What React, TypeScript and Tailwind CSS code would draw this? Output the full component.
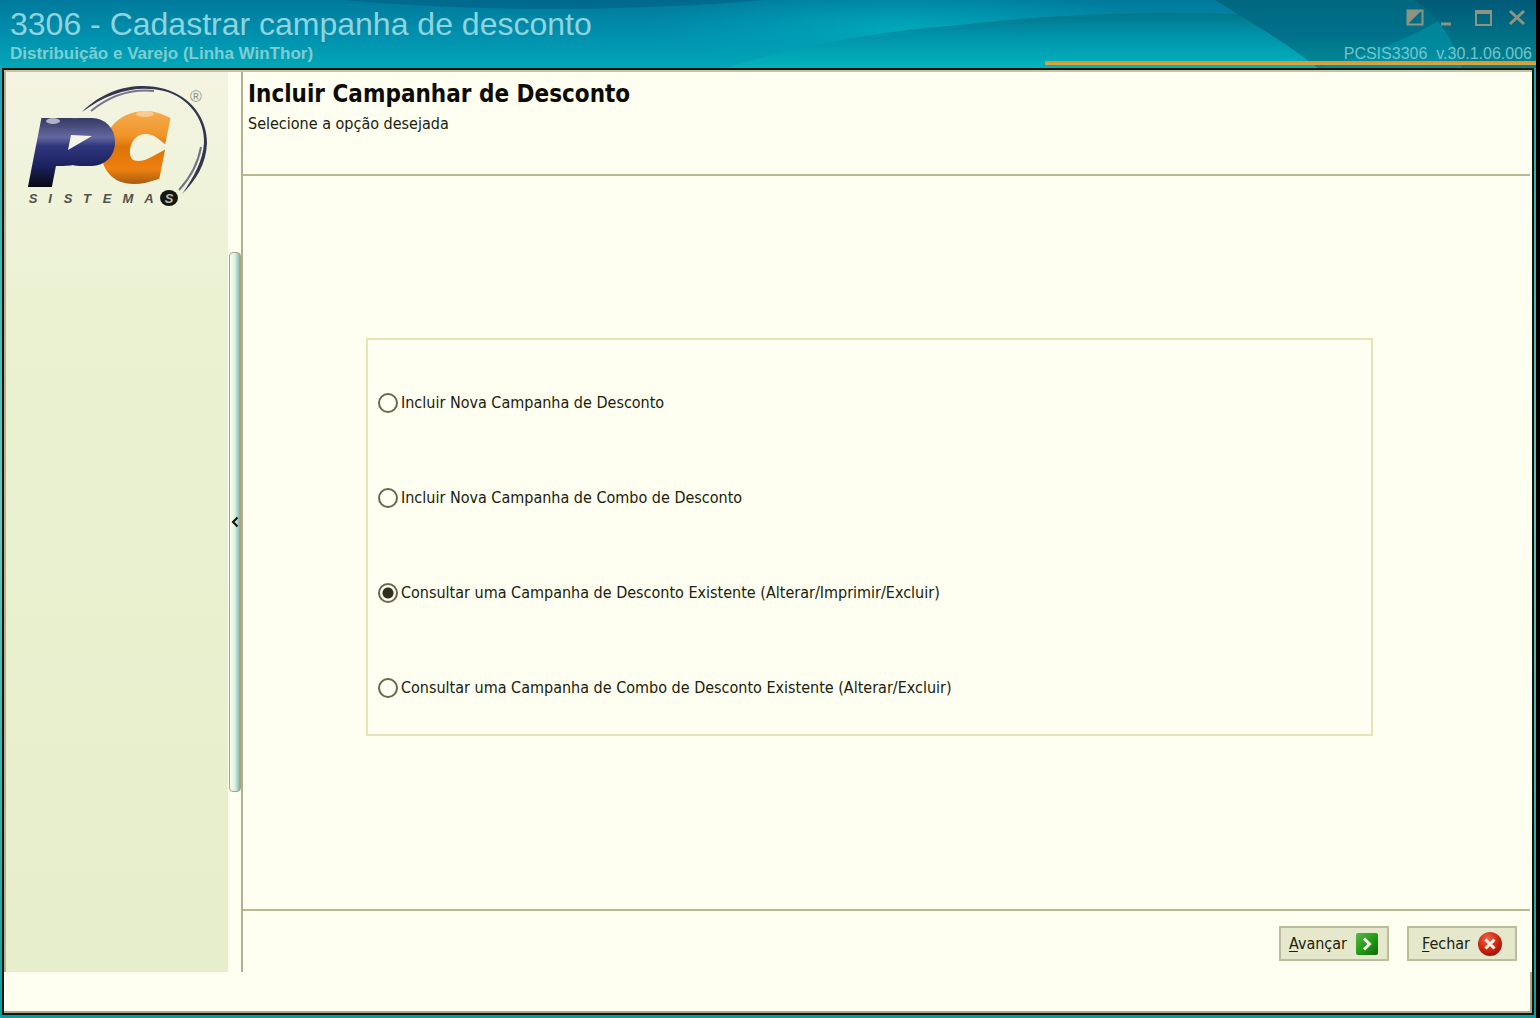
import { useState } from "react";

const OPTIONS = [
  "Incluir Nova Campanha de Desconto",
  "Incluir Nova Campanha de Combo de Desconto",
  "Consultar uma Campanha de Desconto Existente (Alterar/Imprimir/Excluir)",
  "Consultar uma Campanha de Combo de Desconto Existente (Alterar/Excluir)",
];

function TitleWaves() {
  return (
    <svg className="absolute inset-0 h-full w-full" viewBox="0 0 1536 68" preserveAspectRatio="none" aria-hidden="true">
      <defs>
        <linearGradient id="sky" x1="0" y1="0" x2="0" y2="1">
          <stop offset="0" stopColor="#007a9c" />
          <stop offset="0.5" stopColor="#008fad" />
          <stop offset="1" stopColor="#00a8b8" />
        </linearGradient>
        <radialGradient id="glow">
          <stop offset="0" stopColor="#00acbc" stopOpacity="0.9" />
          <stop offset="1" stopColor="#00a0b8" stopOpacity="0" />
        </radialGradient>
        <linearGradient id="swell" x1="0" y1="0" x2="0" y2="1">
          <stop offset="0" stopColor="#007688" />
          <stop offset="0.35" stopColor="#008fa8" />
          <stop offset="1" stopColor="#00b4bc" />
        </linearGradient>
        <linearGradient id="deep" x1="0" y1="0" x2="0" y2="1">
          <stop offset="0" stopColor="#006880" />
          <stop offset="0.5" stopColor="#00708a" />
          <stop offset="1" stopColor="#008c98" />
        </linearGradient>
        <linearGradient id="corner" x1="0" y1="0" x2="0" y2="1">
          <stop offset="0" stopColor="#005a78" />
          <stop offset="1" stopColor="#008490" />
        </linearGradient>
      </defs>
      <rect width="1536" height="68" fill="url(#sky)" />
      <path d="M340 0H765Q700 6 620 8Q480 12 340 0Z" fill="#006488" opacity="0.7" />
      <ellipse cx="900" cy="30" rx="260" ry="44" fill="url(#glow)" />
      <path d="M725 68C800 45 880 31 960 25C1060 13 1150 12 1245 14L1330 68Z" fill="url(#swell)" />
      <path d="M1215 0C1250 22 1285 42 1318 68H1536V0Z" fill="url(#deep)" />
      <path d="M1318 68C1360 56 1400 44 1440 20L1475 68Z" fill="#0094a8" opacity="0.6" />
      <path d="M1414 0C1436 14 1452 36 1462 68H1536V0Z" fill="url(#corner)" />
    </svg>
  );
}

function Logo() {
  return (
    <svg className="mt-2 ml-4 h-[130px] w-[190px]" viewBox="22 80 190 130" role="img" aria-label="PC Sistemas">
      <defs>
        <linearGradient id="navy" gradientUnits="userSpaceOnUse" x1="0" y1="116" x2="0" y2="187">
          <stop offset="0" stopColor="#30345c" />
          <stop offset="0.3" stopColor="#6468a0" />
          <stop offset="0.42" stopColor="#30367c" />
          <stop offset="0.7" stopColor="#1c2260" />
          <stop offset="1" stopColor="#080a14" />
        </linearGradient>
        <linearGradient id="amber" gradientUnits="userSpaceOnUse" x1="0" y1="110" x2="0" y2="184">
          <stop offset="0" stopColor="#f4ae50" />
          <stop offset="0.35" stopColor="#f09428" />
          <stop offset="0.5" stopColor="#dc7408" />
          <stop offset="0.8" stopColor="#ee8010" />
          <stop offset="1" stopColor="#a85c10" />
        </linearGradient>
      </defs>
      <path d="M82 112C107 87 139 82 165 89C192 97 207 119 207 143C206 165 196 180 182 194C194 177 203 160 204 143C205 119 188 97 164 91C137 85 111 91 82 112Z" fill="#34364e" />
      <path d="M91 111C112 94 134 89 154 91" fill="none" stroke="#73758a" strokeWidth="2" />
      <path d="M201 147C198 164 190 178 179 190" fill="none" stroke="#73758a" strokeWidth="2" />
      <g fontFamily="DejaVu Sans" fontWeight="bold" fontStyle="italic" strokeLinejoin="miter">
        <text x="105" y="177" fontSize="81" fill="url(#amber)" stroke="url(#amber)" strokeWidth="12">C</text>
        <text x="31" y="183" fontSize="84" fill="url(#navy)" stroke="url(#navy)" strokeWidth="8">P</text>
      </g>
      <rect x="56" y="118" width="59" height="48" rx="23" fill="url(#navy)" />
      <path d="M71 135L92 136L68 150Z" fill="#f3f4e6" />
      <ellipse cx="53" cy="121" rx="7" ry="3" fill="#ffffff" opacity="0.6" />
      <ellipse cx="145" cy="114" rx="9" ry="3" fill="#ffffff" opacity="0.4" />
      <text x="190" y="102" fontSize="16" fontFamily="Liberation Sans" fill="#90928c">®</text>
      <g fontFamily="Liberation Sans" fontWeight="bold" fontStyle="italic" fontSize="13" fill="#50524c" textAnchor="middle">
        <text x="33" y="203">S</text>
        <text x="50" y="203">I</text>
        <text x="68" y="203">S</text>
        <text x="87" y="203">T</text>
        <text x="107" y="203">E</text>
        <text x="128" y="203">M</text>
        <text x="149" y="203">A</text>
        <ellipse cx="169" cy="198" rx="9" ry="8" fill="#15160f" />
        <text x="169" y="203" fill="#b8baa8">S</text>
      </g>
    </svg>
  );
}

function WindowControls() {
  return (
    <div className="flex gap-3 text-[#8d9580]">
      <button aria-label="Recolher" className="size-[22px]">
        <svg viewBox="0 0 22 22" aria-hidden="true">
          <path d="M3.5 3.5H18.5V17.5H3.5Z" fill="none" stroke="currentColor" strokeWidth="2" />
          <path d="M3 3H18L3 18Z" fill="currentColor" />
        </svg>
      </button>
      <button aria-label="Minimizar" className="size-[22px]">
        <svg viewBox="0 0 22 22" aria-hidden="true">
          <path d="M3 17H13" stroke="currentColor" strokeWidth="3" />
        </svg>
      </button>
      <button aria-label="Maximizar" className="size-[22px]">
        <svg viewBox="0 0 22 22" aria-hidden="true">
          <path d="M4 4H19V18H4Z" fill="none" stroke="currentColor" strokeWidth="2" />
          <path d="M3 5H20" stroke="currentColor" strokeWidth="4" />
        </svg>
      </button>
      <button aria-label="Fechar janela" className="size-[22px]">
        <svg viewBox="0 0 22 22" aria-hidden="true">
          <path d="M4 4L18 17M18 4L4 17" stroke="currentColor" strokeWidth="3" />
        </svg>
      </button>
    </div>
  );
}

function NextIcon() {
  return (
    <svg className="size-6" viewBox="0 0 24 24" aria-hidden="true">
      <defs>
        <linearGradient id="leaf" x1="0" y1="0" x2="1" y2="1">
          <stop offset="0" stopColor="#58b848" />
          <stop offset="0.5" stopColor="#249c18" />
          <stop offset="1" stopColor="#106808" />
        </linearGradient>
      </defs>
      <rect x="1" y="1" width="22" height="22" rx="2" fill="url(#leaf)" />
      <path d="M9 6.5L14.5 12L9 17.5" fill="none" stroke="#fffff0" strokeWidth="3" />
    </svg>
  );
}

function CloseIcon() {
  return (
    <svg className="size-6" viewBox="0 0 24 24" aria-hidden="true">
      <defs>
        <radialGradient id="ruby" cx="0.4" cy="0.3" r="0.75">
          <stop offset="0" stopColor="#ee6850" />
          <stop offset="0.5" stopColor="#d82c14" />
          <stop offset="1" stopColor="#981008" />
        </radialGradient>
      </defs>
      <circle cx="12" cy="12" r="12" fill="url(#ruby)" />
      <path d="M7.5 7.5L16.5 16.5M16.5 7.5L7.5 16.5" stroke="#fff4e4" strokeWidth="3" />
    </svg>
  );
}

export default function App() {
  const [choice, setChoice] = useState(2);
  return (
    <div className="flex h-screen min-h-[700px] flex-col border-r-4 border-black bg-gradient-to-b from-[#00a4b4] via-[#60c8c0] to-[#00a0a4] font-['DejaVu_Sans_Condensed','DejaVu_Sans',sans-serif] text-base text-[#20200c]">
      <header className="relative flex h-[68px] shrink-0 justify-between overflow-hidden font-['Liberation_Sans',sans-serif]">
        <TitleWaves />
        <div className="relative pt-1.5 pl-2.5">
          <h1 className="text-[32px] leading-9 whitespace-nowrap text-[#8fd4dc]">3306 - Cadastrar campanha de desconto</h1>
          <p className="text-[17px] leading-6 font-bold text-[#7fccd2]">Distribuição e Varejo (Linha WinThor)</p>
        </div>
        <div className="relative flex flex-col items-end justify-between pt-[7px] pb-1.5">
          <div className="pr-2">
            <WindowControls />
          </div>
          <p className="pr-1 text-base leading-4 whitespace-pre text-[#74c4cc]">PCSIS3306  v.30.1.06.006</p>
        </div>
        <div className="absolute right-0 bottom-[3px] h-[4px] w-[491px] border-t-2 border-[#e89420] bg-[#c8a850]" />
      </header>

      <div className="mr-0.5 mb-[3px] ml-0.5 flex min-h-0 flex-1 flex-col border-2 border-[#141408] bg-[#fefff0]">
        <div className="flex min-h-0 flex-1 border-t-2 border-[#c4c4a4]">
          <aside className="w-[224px] shrink-0 border-l-2 border-[#b4b494] bg-gradient-to-b from-[#f4f4e2] via-[#ebf2d2] via-25% to-[#e6eecb]">
            <Logo />
          </aside>
          <div className="flex w-[13px] shrink-0 items-center justify-end">
            <button
              aria-label="Recolher painel"
              className="flex h-3/5 w-3 items-center justify-center rounded-sm border border-[#a4a480] bg-gradient-to-r from-[#fbfff0] via-[#dcf0e0] to-[#7eaeac]"
            >
              <svg className="h-3 w-2 shrink-0" viewBox="0 0 8 12" aria-hidden="true">
                <path d="M6.5 1.5L2 6L6.5 10.5" fill="none" stroke="#101008" strokeWidth="2" />
              </svg>
            </button>
          </div>

          <div className="flex min-w-0 flex-1 flex-col border-l-2 border-[#b0b08c] pr-0.5">
            <div className="h-[104px] shrink-0 border-b-2 border-[#b8b894] pt-1.5 pl-[5px]">
              <h2 className="text-2xl leading-8 font-bold text-[#0c0c04]">Incluir Campanhar de Desconto</h2>
              <p className="leading-7">Selecione a opção desejada</p>
            </div>
            <main className="flex min-h-0 flex-1 flex-col justify-center pr-[157px] pb-3 pl-[123px]">
              <fieldset
                aria-label="Opção desejada"
                className="flex flex-col gap-[75px] border-2 border-[#e4e4b4] pt-[53px] pb-9 pl-[10px]"
              >
                {OPTIONS.map((label, i) => (
                  <label key={label} className="flex h-5 items-center gap-[3px] whitespace-nowrap">
                    <input
                      type="radio"
                      name="opcao"
                      checked={choice === i}
                      onChange={() => setChoice(i)}
                      className="size-5 shrink-0 appearance-none rounded-full border-2 border-[#68684c] bg-[#fffff4] checked:bg-[radial-gradient(circle,#30301c_5px,#fffff4_6px)]"
                    />
                    {label}
                  </label>
                ))}
              </fieldset>
            </main>
            <footer className="flex h-[63px] shrink-0 justify-end gap-[18px] border-t-2 border-[#b8b894] pt-[15px] pr-[13px]">
              <button className="flex h-[35px] w-[110px] items-center justify-center gap-2 border-2 border-[#bcbc9c] bg-[#e6e8cc]">
                <span><u className="underline-offset-2">A</u>vançar</span>
                <NextIcon />
              </button>
              <button className="flex h-[35px] w-[110px] items-center justify-center gap-2 border-2 border-[#bcbc9c] bg-[#e6e8cc]">
                <span><u className="underline-offset-2">F</u>echar</span>
                <CloseIcon />
              </button>
            </footer>
          </div>
        </div>
        <div className="h-[41px] shrink-0 border-r-2 border-b-2 border-[#a8a88c]" />
      </div>
    </div>
  );
}
